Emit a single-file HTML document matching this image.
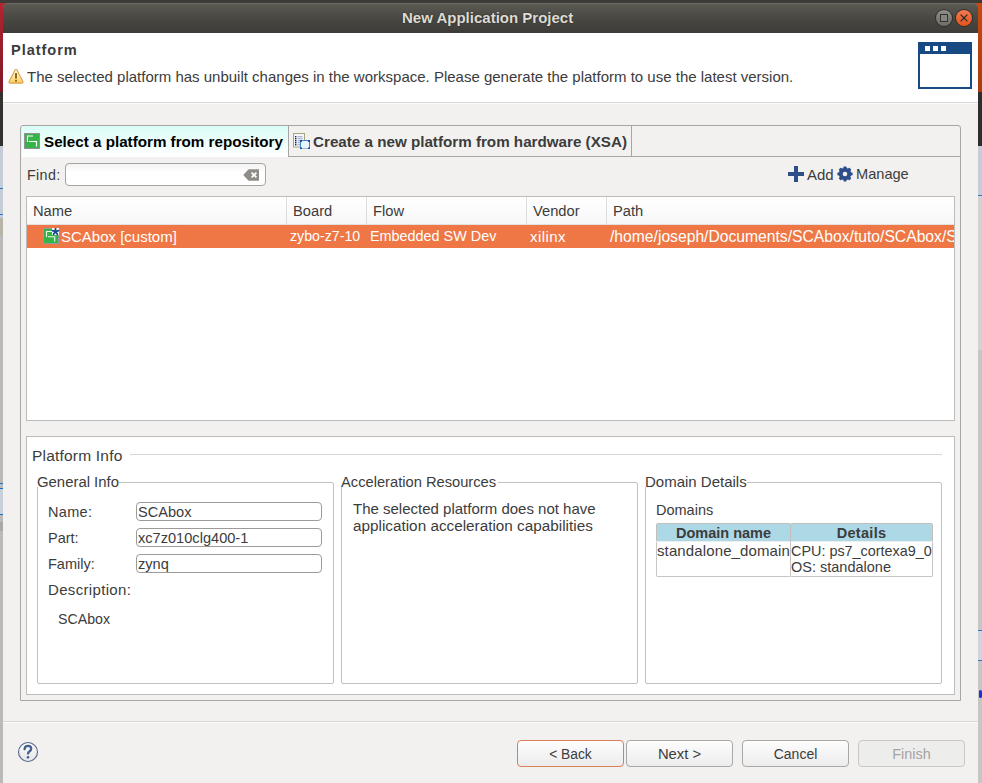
<!DOCTYPE html>
<html><head><meta charset="utf-8">
<style>
*{margin:0;padding:0;box-sizing:border-box}
html,body{width:982px;height:783px;overflow:hidden;background:#3c3b37}
body{position:relative;font-family:"Liberation Sans",sans-serif;font-size:15px;color:#3c3c3c}
.a{position:absolute}
.t{position:absolute;white-space:nowrap;line-height:15px;font-size:15px}
.b{font-weight:bold}
</style></head><body>
<!-- screen strips -->
<div class="a" style="left:0;top:3px;width:3px;height:89px;background:linear-gradient(#b42432,#7c1a24)"></div>
<div class="a" style="left:0;top:92px;width:3px;height:54px;background:#33322e"></div>
<div class="a" style="left:0;top:146px;width:3px;height:637px;background:#bababa"></div>
<div class="a" style="left:0;top:146px;width:3px;height:90px;background:#c4ccd8"></div>
<div class="a" style="left:0;top:188px;width:3px;height:1px;background:#2a78c8"></div>
<div class="a" style="left:0;top:214px;width:3px;height:1px;background:#2a78c8"></div>
<div class="a" style="left:0;top:218px;width:3px;height:18px;background:#b8b4a8"></div>
<div class="a" style="left:0;top:483px;width:3px;height:1px;background:#1a6fc0"></div>
<div class="a" style="left:0;top:488px;width:3px;height:26px;background:#c8d0dc"></div>
<div class="a" style="left:0;top:488px;width:3px;height:1px;background:#1a6fc0"></div>
<div class="a" style="left:0;top:514px;width:3px;height:1px;background:#1a6fc0"></div>
<div class="a" style="left:0;top:522px;width:3px;height:9px;background:#a8a8a8"></div>
<div class="a" style="left:978px;top:3px;width:4px;height:89px;background:linear-gradient(#c64a12,#a83c10)"></div>
<div class="a" style="left:978px;top:92px;width:4px;height:54px;background:#2e2e2e"></div>
<div class="a" style="left:978px;top:146px;width:4px;height:637px;background:#c6c6c6"></div>
<div class="a" style="left:978px;top:146px;width:4px;height:49px;background:#c5cdd8"></div>
<div class="a" style="left:978px;top:195px;width:4px;height:1px;background:#2a78c8"></div>
<div class="a" style="left:978px;top:196px;width:4px;height:154px;background:#d2d2d2"></div>
<div class="a" style="left:978px;top:630px;width:4px;height:30px;background:#d0d4dc"></div>
<div class="a" style="left:978px;top:630px;width:4px;height:1px;background:#2a78c8"></div>
<div class="a" style="left:978px;top:660px;width:4px;height:1px;background:#2a78c8"></div>
<div class="a" style="left:979px;top:690px;width:3px;height:8px;border-radius:2px;background:#2030d0"></div>
<!-- title bar -->
<div class="a" style="left:3px;top:3px;width:5px;height:5px;background:#b42432"></div>
<div class="a" style="left:973px;top:3px;width:5px;height:5px;background:#c64a12"></div>
<div class="a" style="left:3px;top:3px;width:975px;height:30px;border-radius:5px 5px 0 0;background:linear-gradient(#5c5a53,#4a4843 50%,#3d3c38);box-shadow:inset 0 1px 0 #6c6a63"></div>
<div class="t b" style="left:402px;top:10px;color:#dfdbd2;text-shadow:0 0 1.5px rgba(20,20,18,0.8)">New Application Project</div>

<!-- dialog body -->
<div class="a" style="left:3px;top:33px;width:975px;height:750px;background:#f2f1f0"></div>
<div class="a" style="left:3px;top:33px;width:975px;height:69px;background:#fff"></div>
<div class="a" style="left:3px;top:102px;width:975px;height:1px;background:#d9d8d6"></div>
<div class="a" style="left:3px;top:103px;width:975px;height:1px;background:#fafafa"></div>


<!-- title buttons -->
<div class="a" style="left:935px;top:9px;width:18px;height:18px;border-radius:50%;background:#2f2e2b"></div>
<div class="a" style="left:936px;top:10px;width:16px;height:16px;border-radius:50%;background:linear-gradient(#8f8d88,#6f6d68)"></div>
<div class="a" style="left:940px;top:14px;width:8px;height:8px;border:1px solid #35342f;background:#86847f"></div>
<div class="a" style="left:955px;top:9px;width:18px;height:18px;border-radius:50%;background:#2f2e2b"></div>
<div class="a" style="left:956px;top:10px;width:16px;height:16px;border-radius:50%;background:linear-gradient(#f27a50,#e2541d)"></div>
<svg class="a" style="left:956px;top:10px" width="16" height="16" viewBox="0 0 16 16"><path d="M4.6 4.6L11.4 11.4M11.4 4.6L4.6 11.4" stroke="#2b2a26" stroke-width="1.3" fill="none"/><circle cx="8" cy="8" r="1.2" fill="#2b2a26"/></svg>

<!-- header -->
<div class="t b" style="left:11px;top:43px;font-size:14.6px;letter-spacing:0.95px;color:#3c3c3c">Platform</div>
<svg class="a" style="left:8px;top:68px" width="16" height="16" viewBox="0 0 16 16">
<defs><linearGradient id="wg" x1="0" y1="0" x2="0" y2="1"><stop offset="0" stop-color="#fff8dc"/><stop offset="0.5" stop-color="#ffe9a0"/><stop offset="1" stop-color="#fdcb58"/></linearGradient></defs>
<path d="M6.9 2.2Q8 0.9 9.1 2.2L14.9 13.4Q15.5 15.1 13.8 15.1H2.2Q0.5 15.1 1.1 13.4Z" fill="url(#wg)" stroke="#d6a04e" stroke-width="1.1" stroke-linejoin="round"/>
<rect x="7.1" y="5" width="1.8" height="5.5" fill="#7d5a12"/><rect x="7.1" y="11.8" width="1.8" height="1.8" fill="#7d5a12"/>
</svg>
<div class="t" style="left:27px;top:69px">The selected platform has unbuilt changes in the workspace. Please generate the platform to use the latest version.</div>
<div class="a" style="left:918px;top:42px;width:54px;height:47px;border:2px solid #174a83;background:#fff"></div>
<div class="a" style="left:918px;top:42px;width:54px;height:12px;background:#174a83"></div>
<div class="a" style="left:925px;top:46px;width:5px;height:5px;background:#fff"></div>
<div class="a" style="left:933px;top:46px;width:5px;height:5px;background:#fff"></div>
<div class="a" style="left:941px;top:46px;width:5px;height:5px;background:#fff"></div>

<!-- tab folder -->
<div class="a" style="left:20px;top:125px;width:941px;height:576px;border:1px solid #a7a6a4;border-radius:3px 3px 0 0"></div>
<div class="a" style="left:22px;top:126px;width:266px;height:31px;border-radius:2px 3px 0 0;background:linear-gradient(#dafcf6,#fff)"></div>
<div class="a" style="left:288px;top:126px;width:1px;height:31px;background:#a7a6a4"></div>
<div class="a" style="left:631px;top:126px;width:1px;height:31px;background:#a7a6a4"></div>
<div class="a" style="left:288px;top:156px;width:672px;height:1px;background:#a7a6a4"></div>
<svg class="a" style="left:24px;top:133px" width="16" height="16" viewBox="0 0 16 16">
<rect x="0.5" y="0.5" width="15" height="15" fill="#36b449" stroke="#968f93"/>
<path d="M3.5 9V3H9M5 8.5H12.5V13.5" stroke="#fff" stroke-width="1.2" fill="none" stroke-dasharray="none"/>
</svg>
<div class="t b" style="left:44px;top:134px;font-size:15.2px;color:#000">Select a platform from repository</div>
<svg class="a" style="left:292px;top:133px" width="18" height="16" viewBox="0 0 18 16">
<rect x="1.5" y="0.5" width="11" height="13.5" fill="#f4f6fc" stroke="#a9a37e"/>
<g fill="#1c2648"><rect x="3" y="3" width="1.4" height="1.4"/><rect x="3" y="5" width="1.4" height="1.4"/><rect x="3" y="7" width="1.4" height="1.4"/><rect x="3" y="9" width="1.4" height="1.4"/><rect x="3" y="11" width="1.4" height="1.4"/></g>
<g fill="#9aa6c8"><rect x="5.5" y="3.2" width="5" height="1"/><rect x="5.5" y="5.2" width="5" height="1"/><rect x="5.5" y="7.2" width="3" height="1"/><rect x="5.5" y="9.2" width="3" height="1"/><rect x="5.5" y="11.2" width="3" height="1"/></g>
<rect x="8.5" y="7.5" width="9" height="8.5" fill="#eaf4fc" stroke="#3a86c8"/>
<g fill="#1b4fa0"><rect x="8" y="7" width="2" height="2"/><rect x="16" y="7" width="2" height="2"/><rect x="8" y="14.5" width="2" height="2"/><rect x="16" y="14.5" width="2" height="2"/></g>
</svg>
<div class="t b" style="left:313px;top:134px;font-size:15.2px">Create a new platform from hardware (XSA)</div>

<!-- find row -->
<div class="t" style="left:27px;top:168px;font-size:14.3px;letter-spacing:0.35px">Find:</div>
<div class="a" style="left:65px;top:163px;width:201px;height:23px;border:1px solid #a5a4a2;border-radius:4px;background:linear-gradient(#f3f3f3,#fff 40%)"></div>
<svg class="a" style="left:242px;top:168px" width="18" height="14" viewBox="0 0 18 14"><path d="M1.3 7L6.6 1.2H16.6Q17 1.2 17 1.6V12.4Q17 12.8 16.6 12.8H6.6Z" fill="#8f8b86"/><path d="M9.6 4.6L14.4 9.4M14.4 4.6L9.6 9.4" stroke="#fff" stroke-width="1.8"/></svg>
<svg class="a" style="left:788px;top:166px" width="16" height="16" viewBox="0 0 16 16"><path d="M6 0H10V6H16V10H10V16H6V10H0V6H6Z" fill="#2e4e89"/></svg>
<div class="t" style="left:807px;top:167px;font-size:15px">Add</div>
<svg class="a" style="left:837px;top:166px" width="16" height="16" viewBox="0 0 16 16"><g fill="#2e4e89"><circle cx="8" cy="8" r="6.2"/><rect id="tooth" x="6.4" y="0.4" width="3.2" height="3" rx="0.8"/><use href="#tooth" transform="rotate(45 8 8)"/><use href="#tooth" transform="rotate(90 8 8)"/><use href="#tooth" transform="rotate(135 8 8)"/><use href="#tooth" transform="rotate(180 8 8)"/><use href="#tooth" transform="rotate(225 8 8)"/><use href="#tooth" transform="rotate(270 8 8)"/><use href="#tooth" transform="rotate(315 8 8)"/></g><circle cx="8" cy="8" r="2.3" fill="#f2f1f0"/></svg>
<div class="t" style="left:856px;top:167px;font-size:14.6px">Manage</div>

<!-- table -->
<div class="a" style="left:26px;top:196px;width:929px;height:225px;border:1px solid #bdbcba;background:#fff"></div>
<div class="a" style="left:27px;top:197px;width:927px;height:27px;background:linear-gradient(#fff,#f7f7f7)"></div>
<div class="a" style="left:27px;top:224px;width:927px;height:1px;background:#e2e1df"></div>
<div class="a" style="left:286px;top:197px;width:1px;height:27px;background:#dcdcdc"></div>
<div class="a" style="left:366px;top:197px;width:1px;height:27px;background:#dcdcdc"></div>
<div class="a" style="left:526px;top:197px;width:1px;height:27px;background:#dcdcdc"></div>
<div class="a" style="left:606px;top:197px;width:1px;height:27px;background:#dcdcdc"></div>
<div class="t" style="left:33px;top:204px;font-size:14.7px">Name</div>
<div class="t" style="left:293px;top:204px;font-size:14.7px">Board</div>
<div class="t" style="left:373px;top:204px;font-size:14.7px">Flow</div>
<div class="t" style="left:533px;top:204px;font-size:14.7px">Vendor</div>
<div class="t" style="left:613px;top:204px;font-size:14.7px">Path</div>
<div class="a" style="left:27px;top:225px;width:927px;height:23px;background:#ef7745;overflow:hidden">
<svg class="a" style="left:16px;top:3px" width="17" height="17" viewBox="0 0 17 17">
<rect x="0.5" y="0.5" width="15" height="15" fill="#36b449" stroke="#8e9ca2"/>
<path d="M3.5 9V3.5H9M5 8.8H11.7V13.6" stroke="#fff" stroke-width="1.1" fill="none" opacity="0.9"/>
<rect x="9" y="0" width="7" height="7" fill="#fff"/>
<path d="M12.5 0.6V3.6M12.5 3.6L9.6 2.6M12.5 3.6L15.4 2.6M12.5 3.6L10.6 6.2M12.5 3.6L14.4 6.2" stroke="#174a8b" stroke-width="1.8" stroke-linecap="round"/>
</svg>
<div class="t" style="left:34px;top:4px;color:#fff">SCAbox [custom]</div>
<div class="t" style="left:263px;top:4px;color:#fff;font-size:14.2px">zybo-z7-10</div>
<div class="t" style="left:343px;top:4px;color:#fff;font-size:14.4px">Embedded SW Dev</div>
<div class="t" style="left:503px;top:4px;color:#fff;letter-spacing:0.45px">xilinx</div>
<div class="t" style="left:583px;top:4px;color:#fff;font-size:15.68px">/home/joseph/Documents/SCAbox/tuto/SCAbox/SCAbox/platform</div>
</div>


<!-- platform info -->
<div class="a" style="left:26px;top:436px;width:929px;height:259px;border:1px solid #bdbcba;background:#fff"></div>
<div class="t" style="left:32px;top:448px;font-size:15.5px;letter-spacing:0.2px">Platform Info</div>
<div class="a" style="left:130px;top:454px;width:812px;height:1px;background:#d8d8d8"></div>

<div class="a" style="left:37px;top:482px;width:297px;height:202px;border:1px solid #c4c2c0;border-radius:2px"></div>
<div class="a" style="left:36px;top:476px;width:83px;height:11px;background:#fff"></div>
<div class="t" style="left:37px;top:475px;font-size:14.9px">General Info</div>
<div class="t" style="left:48px;top:505px;font-size:14.5px;letter-spacing:0.3px">Name:</div>
<div class="t" style="left:48px;top:531px;font-size:14.5px">Part:</div>
<div class="t" style="left:48px;top:557px;font-size:14.5px">Family:</div>
<div class="t" style="left:48px;top:582px;font-size:15px;letter-spacing:0.33px">Description:</div>
<div class="t" style="left:58px;top:612px;font-size:14.2px">SCAbox</div>
<div class="a" style="left:136px;top:502px;width:186px;height:19px;border:1px solid #9c9b99;border-radius:4px;background:#fff"></div>
<div class="a" style="left:136px;top:528px;width:186px;height:19px;border:1px solid #9c9b99;border-radius:4px;background:#fff"></div>
<div class="a" style="left:136px;top:554px;width:186px;height:19px;border:1px solid #9c9b99;border-radius:4px;background:#fff"></div>
<div class="t" style="left:138px;top:505px;font-size:14.6px">SCAbox</div>
<div class="t" style="left:138px;top:531px;font-size:14.6px">xc7z010clg400-1</div>
<div class="t" style="left:138px;top:557px;font-size:14.6px">zynq</div>

<div class="a" style="left:341px;top:482px;width:297px;height:202px;border:1px solid #c4c2c0;border-radius:2px"></div>
<div class="a" style="left:340px;top:476px;width:158px;height:11px;background:#fff"></div>
<div class="t" style="left:341px;top:475px;font-size:14.7px">Acceleration Resources</div>
<div class="t" style="left:353px;top:501px;font-size:15px">The selected platform does not have</div>
<div class="t" style="left:353px;top:518px;font-size:15.3px">application acceleration capabilities</div>

<div class="a" style="left:645px;top:482px;width:297px;height:202px;border:1px solid #c4c2c0;border-radius:2px"></div>
<div class="a" style="left:644px;top:476px;width:103px;height:11px;background:#fff"></div>
<div class="t" style="left:645px;top:474px;font-size:15px">Domain Details</div>
<div class="t" style="left:656px;top:503px;font-size:14.5px">Domains</div>
<div class="a" style="left:656px;top:523px;width:135px;height:19px;border:1px solid #c3c0bc;border-radius:2px;background:#add8e6"></div>
<div class="a" style="left:790px;top:523px;width:143px;height:19px;border:1px solid #c3c0bc;border-radius:2px;background:#add8e6"></div>
<div class="a" style="left:656px;top:541px;width:135px;height:36px;border:1px solid #c8c6c3;border-top-color:#eee;border-radius:2px;background:#fff"></div>
<div class="a" style="left:790px;top:541px;width:143px;height:36px;border:1px solid #c8c6c3;border-top-color:#eee;border-radius:2px;background:#fff"></div>
<div class="t b" style="left:657px;top:526px;width:133px;text-align:center;font-size:14.5px">Domain name</div>
<div class="t b" style="left:791px;top:526px;width:141px;text-align:center;font-size:14.5px;letter-spacing:0.3px">Details</div>
<div class="t" style="left:657px;top:543px;font-size:15px;letter-spacing:0.12px">standalone_domain</div>
<div class="t" style="left:791px;top:544px;font-size:14.4px">CPU: ps7_cortexa9_0</div>
<div class="t" style="left:791px;top:560px;font-size:14.5px">OS: standalone</div>

<!-- bottom -->
<div class="a" style="left:3px;top:721px;width:975px;height:1px;background:#d9d8d6"></div>
<div class="a" style="left:3px;top:722px;width:975px;height:1px;background:#fbfbfb"></div>
<svg class="a" style="left:17px;top:741px" width="22" height="22" viewBox="0 0 22 22">
<defs><linearGradient id="hg" x1="0" y1="0" x2="0" y2="1"><stop offset="0" stop-color="#fbfbfb"/><stop offset="1" stop-color="#e6e6e6"/></linearGradient></defs>
<circle cx="11" cy="11" r="9.5" fill="url(#hg)" stroke="#55698f" stroke-width="1.15"/>
<path d="M7.6 8.2Q7.8 4.8 11 4.8Q14.2 4.8 14.2 7.6Q14.2 9.4 12.4 10.4Q11.1 11.2 11.1 12.6" stroke="#465f8c" stroke-width="2.3" fill="none" stroke-linecap="round"/>
<circle cx="11" cy="16.2" r="1.3" fill="#465f8c"/>
</svg>
<div class="a" style="left:517px;top:740px;width:107px;height:27px;border:1px solid #d97f5a;border-radius:4px;background:linear-gradient(#fdfdfd,#ececec)"></div>
<div class="t" style="left:517px;top:747px;width:107px;text-align:center;font-size:13.8px">&lt; Back</div>
<div class="a" style="left:626px;top:740px;width:107px;height:27px;border:1px solid #a9a8a6;border-radius:4px;background:linear-gradient(#fdfdfd,#ececec)"></div>
<div class="t" style="left:626px;top:747px;width:107px;text-align:center;font-size:14.8px">Next &gt;</div>
<div class="a" style="left:742px;top:740px;width:107px;height:27px;border:1px solid #a9a8a6;border-radius:4px;background:linear-gradient(#fdfdfd,#ececec)"></div>
<div class="t" style="left:742px;top:747px;width:107px;text-align:center;font-size:14px">Cancel</div>
<div class="a" style="left:858px;top:740px;width:107px;height:27px;border:1px solid #c9c8c6;border-radius:4px;background:#ededec"></div>
<div class="t" style="left:858px;top:747px;width:107px;text-align:center;font-size:14.4px;color:#a5a4a2">Finish</div>

</body></html>
